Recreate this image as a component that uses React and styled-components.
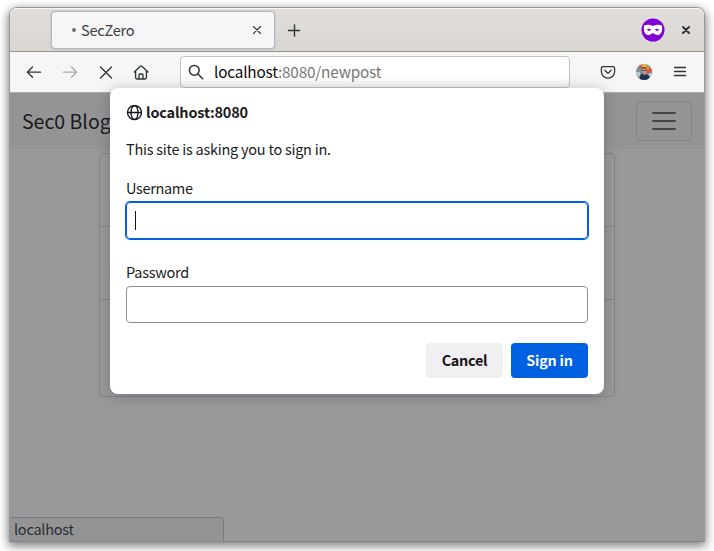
import React from "react";
import styled, { createGlobalStyle } from "styled-components";

const Global = createGlobalStyle`
  * { box-sizing: border-box; }
  body { margin: 0; background: #fff; overflow: hidden; }
  body, button, input { font-family: "Noto Sans CJK SC", "Noto Sans", sans-serif; }
`;

const Desktop = styled.main`
  width: 714px;
  height: 551px;
  padding: 7px 9px 9px;
`;

const Window = styled.div`
  position: relative;
  width: 696px;
  height: 535px;
  border: 1px solid #979797;
  border-bottom-color: #858585;
  border-radius: 8px 8px 0 0;
  box-shadow: 0 3px 10px 1px rgba(0, 0, 0, 0.5);
  display: flex;
  flex-direction: column;
`;

const TitleBar = styled.header`
  height: 44px;
  flex: none;
  display: flex;
  padding: 3px 0 0 41px;
  border-bottom: 1px solid #949391;
  border-radius: 7px 7px 0 0;
  background: linear-gradient(#e1dedb, #dad6d2);
  box-shadow: inset 0 1px #f7f6f5;
`;

const Tab = styled.div`
  width: 224px;
  height: 38px;
  display: flex;
  align-items: center;
  padding: 0 12px 0 20px;
  background: #f6f6f6;
  border: 1px solid #b7b8bb;
  border-radius: 4px;
  box-shadow: 0 0 2px rgba(70, 70, 80, 0.35);
`;

const Dot = styled.span`
  width: 4px;
  height: 4px;
  margin-right: 5px;
  border-radius: 50%;
  background: #6b6f70;
`;

const Label = styled.span`
  font-size: ${(p) => p.$size || 14.5}px;
  line-height: ${(p) => (p.$centered ? 20 : 18)}px;
  margin-bottom: ${(p) => (p.$centered ? 0 : 2)}px;
  font-weight: ${(p) => p.$weight || 400};
  color: ${(p) => p.$color || "#1c1b21"};
  letter-spacing: ${(p) => p.$spacing ?? -0.25}px;
  white-space: nowrap;
`;

const Spacer = styled.span`
  flex: 1;
`;

const Icon = styled.svg`
  display: block;
  flex: none;
  margin: ${(p) => p.$margin || 0};
  fill: none;
  stroke: ${(p) => p.$color || "#2e3436"};
  stroke-width: ${(p) => p.$stroke || 1.3};
  stroke-linecap: round;
  stroke-linejoin: round;
`;

const Toolbar = styled.nav`
  height: 41px;
  flex: none;
  display: flex;
  align-items: center;
  padding: 0 16px;
  background: #f6f6f6;
  border-bottom: 1px solid #b2aaa2;
`;

const AddressBar = styled.div`
  width: 390px;
  height: 32px;
  margin-left: 31px;
  display: flex;
  align-items: center;
  padding-left: 7px;
  background: linear-gradient(#fff 70%, #f4f4f4);
  border: 1px solid #c6c0b9;
  border-radius: 4px;
`;

const Page = styled.section`
  flex: 1;
  min-height: 0;
  display: flex;
  flex-direction: column;
  background: #99999b;
`;

const SiteNav = styled.div`
  height: 56px;
  flex: none;
  display: flex;
  align-items: center;
  justify-content: space-between;
  padding: 0 12px;
  background: #949496;
`;

const Toggle = styled.button`
  width: 56px;
  height: 40px;
  display: grid;
  place-items: center;
  padding: 0;
  background: transparent;
  border: 1px solid #858587;
  border-radius: 4px;
`;

const Posts = styled.div`
  width: 516px;
  height: 244px;
  flex: none;
  margin: 4px 0 0 89px;
  display: grid;
  grid-template-rows: 73px 73px 1fr;
  border: 1px solid #848486;
  border-radius: 4px;
`;

const Post = styled.div`
  border-bottom: 1px solid #848486;
  &:last-child { border-bottom: 0; }
`;

const Status = styled.footer`
  width: 214px;
  height: 24px;
  margin-top: auto;
  padding: 2px 4px;
  background: #949496;
  border: solid #7c7c7e;
  border-width: 1px 1px 0 0;
  border-radius: 0 4px 0 0;
  display: flex;
`;

const Dialog = styled.form`
  position: absolute;
  left: 100px;
  top: 80px;
  width: 494px;
  height: 306px;
  padding: 15px 16px 16px;
  display: flex;
  flex-direction: column;
  background: #fff;
  border-radius: 8px;
  box-shadow: 0 2px 14px rgba(58, 57, 68, 0.35);
`;

const Origin = styled.div`
  display: flex;
  align-items: center;
  height: 20px;
  margin-bottom: 17px;
`;

const Field = styled.label`
  display: flex;
  flex-direction: column;
  margin-top: ${(p) => p.$gap}px;
`;

const Input = styled.span`
  height: 37px;
  margin-top: 3px;
  display: flex;
  align-items: center;
  padding-left: 8px;
  border: 1px solid ${(p) => (p.$focused ? "#0061e0" : "#919195")};
  box-shadow: ${(p) => (p.$focused ? "0 0 0 1px #0061e0" : "none")};
  border-radius: 4px;
`;

const Caret = styled.i`
  width: 1px;
  height: 19px;
  background: #15141a;
`;

const Actions = styled.div`
  display: flex;
  justify-content: flex-end;
  gap: 8px;
  margin-top: auto;
`;

const Button = styled.button`
  width: 77px;
  height: 35px;
  padding: 0 0 2px;
  border: 0;
  border-radius: 4px;
  font-size: 14.4px;
  letter-spacing: -0.25px;
  line-height: 20px;
  font-weight: 700;
  color: ${(p) => (p.$primary ? "#fbfbfe" : "#15141a")};
  background: ${(p) => (p.$primary ? "#0061e0" : "#f0f0f2")};
`;

const Host = styled.span`
  margin-left: 10px;
  color: #0c0c0d;
`;

const Path = styled.span`
  color: #777;
`;

function Mask() {
  return (
    <Icon width="24" height="24" viewBox="0 0 24 24" $margin="7px 16px 0 0" $color="none">
      <circle cx="12" cy="12" r="11.5" fill="#8000d7" />
      <path fill="#fff" fillRule="evenodd" d="M3.2 7.6C5.8 6 9.5 6.6 12 8C14.5 6.6 18.2 6 20.8 7.6C21.8 11.5 20.8 17 16.8 17.1C14.4 17.1 13.4 15.3 12 15.3S9.6 17.1 7.2 17.1C3.2 17 2.2 11.5 3.2 7.6ZM5.7 11.8Q7.9 9.6 10.2 11.8Q7.9 14 5.7 11.8ZM13.8 11.8Q16.1 9.6 18.3 11.8Q16.1 14 13.8 11.8Z" />
    </Icon>
  );
}

function Avatar() {
  return (
    <Icon width="16" height="16" viewBox="0 0 16 16" $margin="0 21px 0 0" $color="none">
      <defs><clipPath id="avatar"><circle cx="8" cy="8" r="8" /></clipPath></defs>
      <g clipPath="url(#avatar)">
        <path fill="#78939a" d="M0 0h16v16H0z" />
        <path fill="#d95745" d="M10 2h3v2h3v5h-5zM3 1h4v3H3z" />
        <path fill="#efb52e" d="M6 0h5v3H6zM11 3h2v2h-2z" />
        <path fill="#b9c9ca" d="M0 8h4v4H0zM13 9h3v3h-3z" />
        <path fill="#6b514a" d="M5.5 3h5v4h-5z" />
        <path fill="#c98c75" d="M6 4.5h4.5v5L8.5 11 6.5 9.5z" />
        <path fill="#755855" d="M6 6h4.5v1H6z" />
        <path fill="#1e3150" d="M3 16l1.5-5L6.5 9.5l2 2 2-1.5 2.5 2 1 4z" />
      </g>
    </Icon>
  );
}

export default function App() {
  return (
    <>
      <Global />
      <Desktop>
        <Window>
          <TitleBar>
            <Tab>
              <Dot />
              <Label $color="#3d4143" $size={14.6} $centered>SecZero</Label>
              <Spacer />
              <Icon width="10" height="10" viewBox="0 0 10 10" $stroke="1.1"><path d="M1.5 1.5l7 7m0-7l-7 7" /></Icon>
            </Tab>
            <Icon width="14" height="14" viewBox="0 0 14 14" $margin="13px 0 0 12px" $stroke="1.4"><path d="M1.5 6.5h11M7.5 1v11" /></Icon>
            <Spacer />
            <Mask />
            <Icon width="10" height="10" viewBox="0 0 10 10" $margin="14px 13px 0 0" $stroke="2"><path d="M2 2l6 6m0-6L2 8" /></Icon>
          </TitleBar>
          <Toolbar>
            <Icon width="16" height="16" viewBox="0 0 16 16"><path d="M14.5 8.2H1.5M6.5 3L1.4 8.2l5.1 5.1" /></Icon>
            <Icon width="16" height="16" viewBox="0 0 16 16" $margin="0 0 0 20px" $color="#a9abac"><path d="M1.5 8.2h13M9.5 3l5.1 5.2-5.1 5.1" /></Icon>
            <Icon width="16" height="16" viewBox="0 0 16 16" $margin="0 0 0 20px"><path d="M2.5 3l11 11M13.5 3l-11 11" /></Icon>
            <Icon width="16" height="16" viewBox="0 0 16 16" $margin="0 0 0 19px"><path d="M1.3 8l6-5.8q.8-.7 1.6 0L15 8M2.6 7v6.6q0 1.4 1.4 1.4h8q1.4 0 1.4-1.4V7M6 15v-4q0-1 1-1h2q1 0 1 1v4" /></Icon>
            <AddressBar>
              <Icon width="16" height="16" viewBox="0 0 16 16" $stroke="1.5"><circle cx="6.3" cy="6.3" r="4.9" /><path d="M10 10l4.7 4.7" /></Icon>
              <Label $size={15.3} $spacing={-0.18}><Host>localhost</Host><Path>:8080/newpost</Path></Label>
            </AddressBar>
            <Spacer />
            <Icon width="16" height="16" viewBox="0 0 16 16" $margin="0 20px 0 0"><path d="M3 2.6h10q1.6 0 1.6 1.6v3.3a6.6 6.6 0 0 1-13.2 0V4.2q0-1.6 1.6-1.6zM4.8 6.3L8 9.4l3.2-3.1" /></Icon>
            <Avatar />
            <Icon width="14" height="14" viewBox="0 0 14 14" $margin="0 1px 0 0"><path d="M1.5 2.5h11M1.5 6.5h11M1.5 10.5h11" /></Icon>
          </Toolbar>
          <Page>
            <SiteNav>
              <Label $size={19.5} $color="#19191a" $spacing={0} $centered>Sec0 Blog</Label>
              <Toggle type="button" aria-label="Menu">
                <Icon width="26" height="20" viewBox="0 0 26 20" $color="#454547" $stroke="2"><path d="M2 2h22M2 10h22M2 18h22" /></Icon>
              </Toggle>
            </SiteNav>
            <Posts><Post /><Post /><Post /></Posts>
            <Status><Label $color="#2d2d31">localhost</Label></Status>
          </Page>
          <Dialog>
            <Origin>
              <Icon width="16" height="16" viewBox="0 0 16 16" $margin="0 4px 0 0" $color="#15141a"><circle cx="8.5" cy="7.5" r="7" /><ellipse cx="8.5" cy="7.5" rx="3.5" ry="7" /><path d="M1.5 7.5h14" /></Icon>
              <Label $weight={700} $spacing={-0.18}>localhost:8080</Label>
            </Origin>
            <Label>This site is asking you to sign in.</Label>
            <Field $gap={19}><Label $spacing={-0.33}>Username</Label><Input $focused><Caret /></Input></Field>
            <Field $gap={24}><Label>Password</Label><Input /></Field>
            <Actions><Button type="button">Cancel</Button><Button type="button" $primary>Sign in</Button></Actions>
          </Dialog>
        </Window>
      </Desktop>
    </>
  );
}
